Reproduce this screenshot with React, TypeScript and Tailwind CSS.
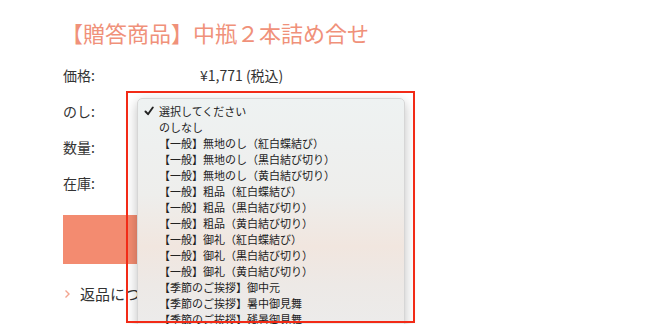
import React from "react";

const noshiOptions = [
  "のしなし",
  "【一般】無地のし（紅白蝶結び）",
  "【一般】無地のし（黒白結び切り）",
  "【一般】無地のし（黄白結び切り）",
  "【一般】粗品（紅白蝶結び）",
  "【一般】粗品（黒白結び切り）",
  "【一般】粗品（黄白結び切り）",
  "【一般】御礼（紅白蝶結び）",
  "【一般】御礼（黒白結び切り）",
  "【一般】御礼（黄白結び切り）",
  "【季節のご挨拶】御中元",
  "【季節のご挨拶】暑中御見舞",
  "【季節のご挨拶】残暑御見舞",
];

const rows = [
  { label: "価格:", value: "¥1,771 (税込)" },
  { label: "のし:", value: "" },
  { label: "数量:", value: "" },
  { label: "在庫:", value: "" },
];

export default function App() {
  return (
    <div
      className="relative w-[652px] h-[324px] overflow-hidden bg-white text-[#333]"
      style={{ fontFamily: '"Noto Sans CJK JP", "Noto Sans", sans-serif' }}
    >
      <div className="pl-[63px] pt-[17px]">
        {/* Title */}
        <h1 className="text-[22px] leading-[30px] text-[#f0917a] -ml-[2px]">
          【贈答商品】中瓶２本詰め合せ
        </h1>

        {/* Spec rows */}
        <div className="mt-[10px] flex flex-col">
          {rows.map((row) => (
            <div key={row.label} className="flex h-[36px] items-center text-[14px]">
              <span className="w-[137px]">{row.label}</span>
              <span>{row.value}</span>
            </div>
          ))}
        </div>

        {/* Cart button */}
        <div className="mt-[14px] h-[49px] w-[330px] bg-[#f38b70]" />

        {/* Link */}
        <div className="mt-[19px] flex items-center gap-[9px] text-[15px]">
          <svg width="7" height="10" viewBox="0 0 7 10" className="ml-[1px]">
            <path d="M1.5 1.5 L5 5 L1.5 8.5" fill="none" stroke="#f3a58f" strokeWidth="1.4" />
          </svg>
          <span>返品について</span>
        </div>
      </div>

      {/* Dropdown menu overlay */}
      <div className="absolute left-[137px] top-[98px] w-[268px] h-[240px] rounded-[5px] border border-[#d6d6d6] bg-[linear-gradient(180deg,#eef2f2_0%,#eeeeec_40%,#f1e6df_62%,#ede9e6_78%,#ececec_100%)] shadow-[0_4px_12px_rgba(0,0,0,0.25)] pt-[4px]">
        <div className="flex h-[16px] items-center text-[11px] leading-[16px] text-[#222]">
          <span className="flex w-[20px] justify-end pr-[4px]">
            <svg width="10" height="10" viewBox="0 0 10 10">
              <path d="M1.5 5.5 L4 8.2 L8.8 1.5" fill="none" stroke="#222" strokeWidth="1.9" strokeLinecap="round" strokeLinejoin="round" />
            </svg>
          </span>
          <span className="pl-[1px]">選択してください</span>
        </div>
        {noshiOptions.map((opt) => (
          <div key={opt} className="flex h-[16px] items-center pl-[21px] text-[11px] leading-[16px] text-[#222]">
            {opt}
          </div>
        ))}
      </div>

      {/* Highlight frame */}
      <div className="absolute left-[126px] top-[91px] w-[289px] h-[232px] border-2 border-[#f22a16]" />
    </div>
  );
}
